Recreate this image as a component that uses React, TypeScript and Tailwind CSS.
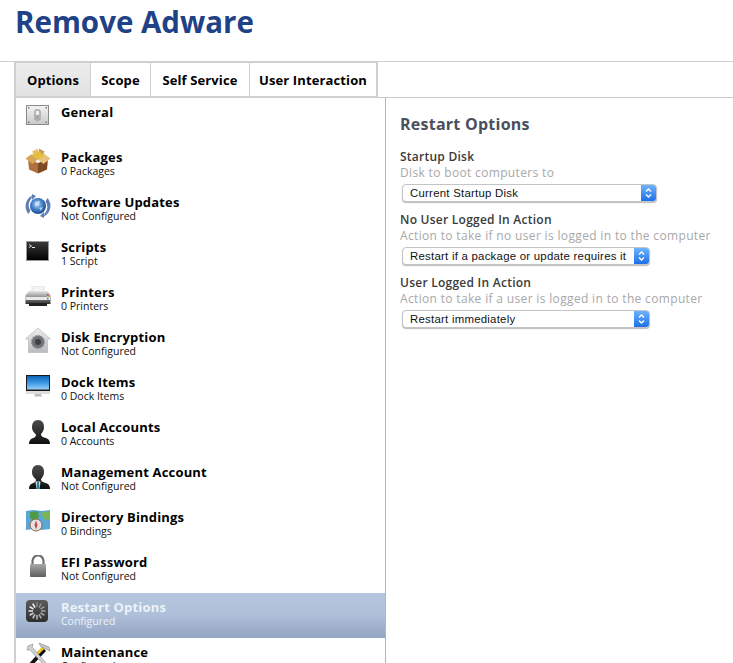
import React from "react";

function Grad({ id, stops }: { id: string; stops: [string, string][] }) {
  return (
    <linearGradient id={id} x1="0" y1="0" x2="0" y2="1">
      {stops.map(([o, c]) => (
        <stop key={o} offset={o} stopColor={c} />
      ))}
    </linearGradient>
  );
}

const Svg = ({ children }: { children: React.ReactNode }) => (
  <svg width="26" height="26" viewBox="0 0 26 26" className="block">
    {children}
  </svg>
);

const person = "M13 0 C17 0 19 3 19 7 C19 11 17 12.5 16 14.5 C16 16.5 19 17.5 22 18.5 C24.5 19.5 25 22 25 24 H4 C4 22 4.5 19.5 7 18.5 C10 17.5 11 16.5 11 14.5 C9 12.5 7 11 7 7 C7 3 9 0 13 0 Z";

const icons: Record<string, React.ReactNode> = {
  general: (
    <Svg>
      <defs><Grad id="g1" stops={[["0", "#f4f4f4"], ["1", "#c9c9c9"]]} /></defs>
      <rect x="1.5" y="0.5" width="22" height="19" fill="url(#g1)" stroke="#8a8a8a" />
      <rect x="3" y="2" width="1.5" height="1.5" fill="#777" /><rect x="20.5" y="2" width="1.5" height="1.5" fill="#777" />
      <rect x="3" y="16.5" width="1.5" height="1.5" fill="#777" /><rect x="20.5" y="16.5" width="1.5" height="1.5" fill="#777" />
      <rect x="10" y="5" width="5" height="10" rx="1" fill="#ececec" stroke="#888" />
      <rect x="10.5" y="10" width="4" height="4.5" fill="#a8a8a8" />
    </Svg>
  ),
  packages: (
    <Svg>
      <path d="M3 11 L13 15 L13 25.5 L4 21.5 Z" fill="#b0703c" />
      <path d="M23 11 L13 15 L13 25.5 L22 21.5 Z" fill="#7d4a24" />
      <path d="M6 7 L13 3 L21 7 L13 12 Z" fill="#e3c03c" />
      <path d="M0.5 10.5 L6 6.5 L13 11.5 L7.5 16 Z" fill="#d9a55c" />
      <path d="M25.5 10.5 L20 6.5 L13 11.5 L18.5 16 Z" fill="#e8c178" />
      <path d="M7 3.5 L13 0.5 L13 3.5 L9 6.5 Z" fill="#e9bf6d" />
      <path d="M19.5 3.5 L14 0.5 L14 3.5 L18 6.5 Z" fill="#c89a55" />
    </Svg>
  ),
  updates: (
    <Svg>
      <defs>
        <radialGradient id="g3" cx="0.45" cy="0.4" r="0.6">
          <stop offset="0" stopColor="#b9d9f5" />
          <stop offset="0.6" stopColor="#3f79c4" />
          <stop offset="1" stopColor="#1c4a94" />
        </radialGradient>
      </defs>
      <circle cx="13" cy="12" r="8" fill="url(#g3)" />
      <path d="M10 8 L15 7 L14 11 L10 12 Z M14 14 L18 13 L16 17 Z" fill="#dbeafb" opacity="0.7" />
      <path d="M3.5 20 A12 12 0 0 1 7 1.5 L6.5 4.5 A9 9 0 0 0 5.5 16.5 Z" fill="#5d7db5" />
      <path d="M22.5 4 A12 12 0 0 1 19 22.5 L19.5 19.5 A9 9 0 0 0 20.5 7.5 Z" fill="#5d7db5" />
      <path d="M7 0 L11 2 L7 6 Z" fill="#5d7db5" /><path d="M19 24 L15 22 L19 18 Z" fill="#5d7db5" />
    </Svg>
  ),
  scripts: (
    <Svg>
      <defs><Grad id="g4" stops={[["0", "#3a3a3a"], ["1", "#000"]]} /></defs>
      <rect x="1" y="0" width="23" height="20" fill="#9a9a9a" />
      <rect x="2" y="1" width="21" height="18" fill="url(#g4)" />
      <path d="M4 3.5 L6.5 5 L4 6.5" stroke="#fff" strokeWidth="0.8" fill="none" />
      <rect x="7" y="6" width="3" height="0.9" fill="#fff" />
    </Svg>
  ),
  printers: (
    <Svg>
      <defs><Grad id="g5" stops={[["0", "#e6e6e6"], ["0.5", "#8b8b8b"], ["1", "#2f2f2f"]]} /></defs>
      <rect x="7" y="0" width="12" height="7" fill="#f4f4f4" stroke="#ccc" strokeWidth="0.5" />
      <path d="M4 5 H22 L25.5 9 V18 H0.5 V9 Z" fill="url(#g5)" />
      <rect x="1" y="11" width="24" height="3" fill="#e8e8e8" />
      <rect x="4" y="17" width="18" height="3" fill="#222" />
      <rect x="22" y="8" width="1.5" height="1.5" fill="#d33" /><rect x="22" y="10" width="1.5" height="1.5" fill="#dc3" />
      <rect x="22" y="12" width="1.5" height="1.5" fill="#38c" />
    </Svg>
  ),
  disk: (
    <Svg>
      <defs><Grad id="g6" stops={[["0", "#eeeeee"], ["1", "#b9bcc0"]]} /></defs>
      <path d="M13 0 L25.5 11 H22.5 V24.5 H3.5 V11 H0.5 Z" fill="url(#g6)" stroke="#b0b0b0" strokeWidth="0.6" />
      <circle cx="13" cy="14" r="6.5" fill="#6f7175" />
      <circle cx="13" cy="14" r="6.5" fill="none" stroke="#999" strokeDasharray="1.5 1.5" strokeWidth="1.5" />
      <circle cx="13" cy="14" r="3" fill="#3f4043" />
    </Svg>
  ),
  dock: (
    <Svg>
      <defs><Grad id="g7" stops={[["0", "#0a63b8"], ["0.6", "#4aa2ec"], ["1", "#9bd0f5"]]} /></defs>
      <rect x="1" y="0" width="24" height="16" fill="#1a1a1a" />
      <rect x="2" y="1" width="22" height="13.5" fill="url(#g7)" />
      <rect x="1" y="16" width="24" height="3" fill="#dedede" />
      <path d="M10 19 H16 L17 21.5 H9 Z" fill="#bdbdbd" />
    </Svg>
  ),
  local: (
    <Svg>
      <defs><Grad id="g8" stops={[["0", "#4b4b4b"], ["1", "#101010"]]} /></defs>
      <path d={person} fill="url(#g8)" />
    </Svg>
  ),
  mgmt: (
    <Svg>
      <defs><Grad id="g9" stops={[["0", "#4b4b4b"], ["1", "#101010"]]} /></defs>
      <path d={person} fill="url(#g9)" />
      <path d="M10.5 16.5 H15.5 L14.5 24 H11.5 Z" fill="#dfe7ee" />
      <path d="M12 17 H14 L14.5 24 H11.5 Z" fill="#2d7f9c" />
    </Svg>
  ),
  directory: (
    <Svg>
      <path d="M1 1 L8 0 L17 1 L25 0 V19 L17 20 L8 19 L1 20 Z" fill="#5aa6d6" />
      <path d="M5 2 L13 1 L14 7 L9 11 L5 8 Z" fill="#4f9a45" />
      <path d="M16 3 L24 1 V10 L19 9 Z" fill="#7fb455" />
      <circle cx="11" cy="15" r="6" fill="#e3e3e3" stroke="#8a6a3c" />
      <path d="M11 10.5 L12.5 15 L11 19.5 L9.5 15 Z" fill="#c44" />
    </Svg>
  ),
  efi: (
    <Svg>
      <defs><Grad id="g11" stops={[["0", "#a8a8a8"], ["1", "#5f5f5f"]]} /></defs>
      <path d="M7.5 9 V6 A5.5 5.5 0 0 1 18.5 6 V9" fill="none" stroke="#6f6f6f" strokeWidth="2.2" />
      <rect x="5" y="9" width="16" height="13" rx="1" fill="url(#g11)" />
    </Svg>
  ),
  restart: (
    <Svg>
      <defs><Grad id="g12" stops={[["0", "#5c5c5c"], ["1", "#2e2e2e"]]} /></defs>
      <rect x="1" y="0" width="22" height="22" rx="4" fill="url(#g12)" />
      {Array.from({ length: 12 }).map((_, i) => (
        <rect key={i} x="11.2" y="2.5" width="1.6" height="4.5" fill="#fff" opacity={0.3 + (i / 12) * 0.7}
          transform={`rotate(${i * 30} 12 11)`} />
      ))}
    </Svg>
  ),
  maintenance: (
    <Svg>
      <path d="M2 24 L18 6 L21 9 L5 26 Z" fill="#111" />
      <path d="M12 12 L20 4" stroke="#e8c52a" strokeWidth="3" />
      <path d="M14 1 L24 5 L25 9 L19 6 L16 5 Z" fill="#c9c9c9" stroke="#777" strokeWidth="0.5" />
      <path d="M3 4 L8 2 L7 5 L21 21 L19 23 L5 8 L2 8 Z" fill="#d2d2d2" stroke="#777" strokeWidth="0.5" />
    </Svg>
  ),
};

const iconTop: Record<string, string> = {
  general: "pt-[7px]",
  packages: "pt-[5px]",
  updates: "pt-[6px]",
  scripts: "pt-[8px]",
  printers: "pt-[8px]",
  disk: "pt-[5px]",
  dock: "pt-[7px]",
  local: "pt-[7px]",
  mgmt: "pt-[7px]",
  directory: "pt-[7px]",
  efi: "pt-[7px]",
  restart: "pt-[7px]",
  maintenance: "pt-[4px]",
};

const rows = [
  ["general", "General", ""],
  ["packages", "Packages", "0 Packages"],
  ["updates", "Software Updates", "Not Configured"],
  ["scripts", "Scripts", "1 Script"],
  ["printers", "Printers", "0 Printers"],
  ["disk", "Disk Encryption", "Not Configured"],
  ["dock", "Dock Items", "0 Dock Items"],
  ["local", "Local Accounts", "0 Accounts"],
  ["mgmt", "Management Account", "Not Configured"],
  ["directory", "Directory Bindings", "0 Bindings"],
  ["efi", "EFI Password", "Not Configured"],
  ["restart", "Restart Options", "Configured"],
  ["maintenance", "Maintenance", "Configured"],
];

function Select({ value, w }: { value: string; w: string }) {
  return (
    <div className={`${w} ml-[2px] h-[18px] flex rounded-[4px] border border-[#c4c4c4] shadow-[0_1px_1px_#bbb] overflow-hidden bg-white`}>
      <div className="flex-1 pl-[7px] text-[11.4px] leading-[16px] text-[#111] font-['Liberation_Sans',sans-serif] tracking-[0.25px] whitespace-nowrap overflow-hidden">
        {value}
      </div>
      <div className="w-[15px] flex items-center justify-center bg-gradient-to-b from-[#6db3fb] to-[#1b6fe8]">
        <svg width="9" height="12" viewBox="0 0 9 12">
          <path d="M2 4.5 L4.5 2 L7 4.5 M2 7.5 L4.5 10 L7 7.5" fill="none" stroke="#fff" strokeWidth="1.3" />
        </svg>
      </div>
    </div>
  );
}

function Field({ title, desc, value, w }: { title: string; desc: string; value: string; w: string }) {
  return (
    <div className="h-[63px]">
      <div className="text-[12px] leading-[14px] font-semibold text-[#3a3a3a] tracking-[0.25px]">{title}</div>
      <div className="text-[12px] leading-[17px] text-[#a8a8a8] mb-[3px] tracking-[0.34px] whitespace-nowrap">{desc}</div>
      <Select value={value} w={w} />
    </div>
  );
}

function Tab({ label, w, active, last }: { label: string; w: string; active?: boolean; last?: boolean }) {
  return (
    <div
      className={`${w} flex items-center justify-center pt-[2px] text-[13px] font-bold text-black tracking-[0.12px] ${
        last ? "" : "border-r border-[#cfcfcf]"
      } ${active ? "bg-gradient-to-b from-[#ececec] to-[#e2e2e2]" : "bg-white"}`}
    >
      {label}
    </div>
  );
}

export default function App() {
  return (
    <div className="w-[733px] h-[663px] overflow-hidden bg-white font-['Open_Sans',sans-serif]">
      <h1 className="h-[61px] pl-[15px] pt-[4px] text-[29.5px] leading-[36px] font-bold text-[#1f4287]">
        Remove Adware
      </h1>
      <div className="flex h-[37px] border-t border-[#d0d0d0]">
        <div className="flex border-2 border-[#cfcfcf] ml-[14px] h-[37px] -mt-px">
          <Tab label="Options" w="w-[75px]" active />
          <Tab label="Scope" w="w-[60px]" />
          <Tab label="Self Service" w="w-[99px]" />
          <Tab label="User Interaction" w="w-[126px]" last />
        </div>
        <div className="flex-1 border-b border-[#c8c8c8]" />
      </div>
      <div className="flex">
        <div className="w-[372px] ml-[14px] border-l-2 border-[#cfcfcf] border-r border-r-[#b5b5b5] pt-px -mt-px">
          {rows.map(([k, name, sub]) => {
            const sel = k === "restart";
            return (
              <div key={k} className={`h-[45px] flex pl-[9px] ${sel ? "bg-gradient-to-b from-[#b5c6de] via-[#aebfd9] to-[#93a4c2]" : ""}`}>
                <div className={`w-[26px] mr-[10px] shrink-0 ${iconTop[k]}`}>{icons[k]}</div>
                <div className="pt-[6px]">
                  <div className={`text-[13px] leading-[16px] font-bold tracking-[0.18px] ${sel ? "text-[#eef2f8]" : "text-black"}`}>{name}</div>
                  <div className={`text-[10.5px] leading-[12px] whitespace-nowrap ${sel ? "text-[#eef2f8]" : "text-[#111]"}`}>{sub}</div>
                </div>
              </div>
            );
          })}
        </div>
        <div className="flex-1 pl-[14px]">
          <div className="pt-[16px] h-[52px] text-[16px] leading-[20px] font-bold text-[#49505c] tracking-[0.25px]">Restart Options</div>
          <Field title="Startup Disk" desc="Disk to boot computers to" value="Current Startup Disk" w="w-[255px]" />
          <Field title="No User Logged In Action" desc="Action to take if no user is logged in to the computer" value="Restart if a package or update requires it" w="w-[248px]" />
          <Field title="User Logged In Action" desc="Action to take if a user is logged in to the computer" value="Restart immediately" w="w-[248px]" />
        </div>
      </div>
    </div>
  );
}
